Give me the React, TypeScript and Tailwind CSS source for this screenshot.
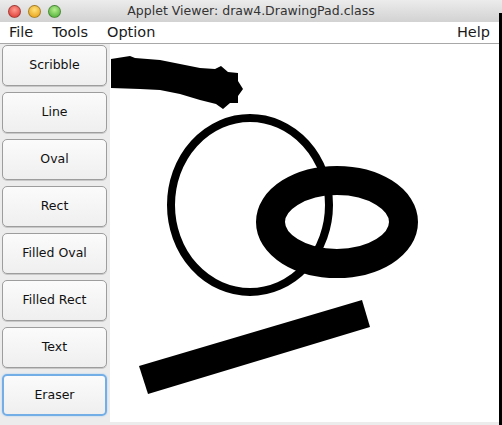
const tools = ["Scribble", "Line", "Oval", "Rect", "Filled Oval", "Filled Rect", "Text", "Eraser"];

function Light({ from, to }: { from: string; to: string }) {
  return (
    <span
      className="block h-[13px] w-[13px] rounded-full border border-black/30"
      style={{ background: `radial-gradient(circle at 50% 35%, ${from}, ${to})` }}
    />
  );
}

export default function App() {
  return (
    <div className="flex h-[425px] w-[502px] flex-col overflow-hidden bg-white font-['DejaVu_Sans',sans-serif] text-[#1a1a1a]">
      {/* title bar */}
      <div className="relative flex h-[22px] shrink-0 items-center bg-gradient-to-b from-[#ececec] to-[#d2d2d2] px-[8px]">
        <div className="flex gap-[7px]">
          <Light from="#ff9a8f" to="#d9302a" />
          <Light from="#ffe27a" to="#e59a0d" />
          <Light from="#b6ef8f" to="#43a82e" />
        </div>
        <span className="absolute left-0 right-0 text-center text-[12.5px] text-[#333]">
          Applet Viewer: draw4.DrawingPad.class
        </span>
        <span className="absolute bottom-0 right-0 top-[13px] w-[3px] bg-black" />
      </div>

      <div className="flex flex-1 flex-col border-r-[3px] border-black">
        {/* menu bar */}
        <div className="flex h-[22px] shrink-0 items-center border-b border-[#a8a8a8] bg-white pl-[9px] pr-[9px] text-[14.5px]">
          <span className="mr-[19px]">File</span>
          <span className="mr-[19px]">Tools</span>
          <span>Option</span>
          <span className="ml-auto">Help</span>
        </div>

        <div className="flex flex-1 flex-col">
          <div className="flex flex-1">
            {/* tool buttons */}
            <div className="flex w-[110px] shrink-0 flex-col gap-[6px] bg-[#ececec] pl-[2px] pr-[3px] pt-[1px]">
              {tools.map((t) =>
                t === "Eraser" ? (
                  <div
                    key={t}
                    className="flex h-[42px] items-center justify-center rounded-[5px] border-[2px] border-[#74aee6] bg-gradient-to-b from-[#fbfbfb] to-[#efefef] text-[12.5px] text-[#111] shadow-[0_0_2px_#9cc8f0]"
                  >
                    {t}
                  </div>
                ) : (
                  <div
                    key={t}
                    className="flex h-[41px] items-center justify-center rounded-[5px] border border-[#9d9d9d] bg-gradient-to-b from-[#fbfbfb] to-[#efefef] text-[12.5px] text-[#111] shadow-[0_1px_0_#c8c8c8]"
                  >
                    {t}
                  </div>
                )
              )}
            </div>

            {/* drawing canvas */}
            <div className="relative flex-1 bg-white">
              <svg className="absolute inset-0 h-full w-full" viewBox="110 44 389 378" preserveAspectRatio="none">
                <polygon
                  fill="#000"
                  points="111,59 130,56 135,58 160,60 180,64 200,68 215,69 221,66 228,72 238,73 238,81 243,89 238,96 238,103 230,103 223,109 216,104 200,100 180,94 160,90 140,89 111,88"
                />
                <ellipse cx="250" cy="205" rx="79" ry="87" fill="none" stroke="#000" strokeWidth="8" />
                <ellipse cx="337" cy="222" rx="66.5" ry="41.5" fill="none" stroke="#000" strokeWidth="29" />
                <polygon fill="#000" points="139,366 362,300 370,327 148,394" />
              </svg>
            </div>
          </div>
          <div className="h-[3px] shrink-0 bg-[#ececec]" />
        </div>
      </div>
    </div>
  );
}
